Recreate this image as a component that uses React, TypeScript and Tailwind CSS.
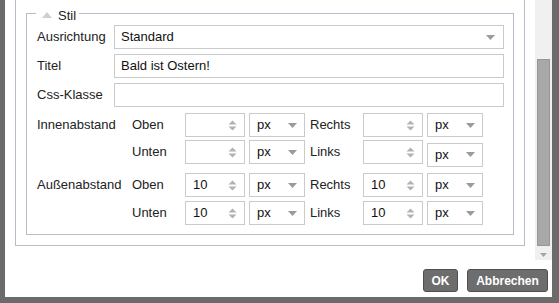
import React from "react";

const label = "text-[13px] text-[#222]";

function Arrow() {
  return (
    <svg width="9" height="5" viewBox="0 0 9 5">
      <path d="M0 0 L9 0 L4.5 5 Z" fill="#9a9a9a" />
    </svg>
  );
}

function Spin({ value }: { value?: string }) {
  return (
    <div className="flex h-[24px] w-[60px] items-center justify-between border border-[#cacaca] bg-white pl-[7px] pr-[7px] text-[13px] text-[#111]">
      <span>{value}</span>
      <svg width="9" height="11" viewBox="0 0 9 11">
        <path d="M0.5 4.5 L4.5 0.5 L8.5 4.5 Z" fill="#b2b2b2" />
        <path d="M0.5 6.5 L4.5 10.5 L8.5 6.5 Z" fill="#b2b2b2" />
      </svg>
    </div>
  );
}

function Unit({ className = "" }: { className?: string }) {
  return (
    <div
      className={`flex h-[24px] w-[56px] items-center justify-between border border-[#cacaca] bg-white pl-[7px] pr-[7px] text-[13px] text-[#111] ${className}`}
    >
      <span>px</span>
      <Arrow />
    </div>
  );
}

function SpacingRow({
  group,
  a,
  b,
  value,
  shiftUnit,
}: {
  group?: string;
  a: string;
  b: string;
  value?: string;
  shiftUnit?: boolean;
}) {
  return (
    <div className="flex h-[24px] items-center">
      <span className={`${label} w-[95px]`}>{group}</span>
      <span className={`${label} w-[53px]`}>{a}</span>
      <Spin value={value} />
      <Unit className="ml-[4px]" />
      <span className={`${label} ml-[5px] w-[53px]`}>{b}</span>
      <Spin value={value} />
      <Unit className={shiftUnit ? "ml-[4px] mt-[5px]" : "ml-[4px]"} />
    </div>
  );
}

export default function App() {
  return (
    <div
      className="flex h-[303px] w-[559px] bg-[#6b6b6b] pl-[5px]"
      style={{ fontFamily: '"Liberation Sans", Arial, sans-serif' }}
    >
      <div className="flex h-[297px] w-[547px] flex-col bg-white">
        <div className="flex h-[260px]">
          <div className="h-[260px] w-[530px] overflow-hidden">
            <div className="ml-[10px] w-[510px] border-x border-b border-[#babac9] px-[10px] pb-[10px] pt-[1px]">
              <fieldset className="border border-[#babac9] pb-[9px] pl-[10px] pr-[9px] pt-0">
                <legend className="-ml-[1px] pl-[6px] pr-[3px]">
                  <span className="inline-flex items-center gap-[6px] text-[13px] leading-[15px] text-[#222]">
                    <svg width="10" height="6" viewBox="0 0 10 6">
                      <path d="M0 6 L5 0 L10 6 Z" fill="#cfcfcf" />
                    </svg>
                    Stil
                  </span>
                </legend>
                <div className="flex flex-col gap-[5px]">
                  <div className="flex h-[24px] items-center">
                    <span className={`${label} w-[77px]`}>Ausrichtung</span>
                    <div className="flex h-[24px] flex-1 items-center justify-between border border-[#cacaca] bg-white pl-[6px] pr-[8px] text-[13px] text-[#111]">
                      <span>Standard</span>
                      <Arrow />
                    </div>
                  </div>
                  <div className="flex h-[24px] items-center">
                    <span className={`${label} w-[77px]`}>Titel</span>
                    <div className="flex h-[24px] flex-1 items-center border border-[#cacaca] bg-white pl-[6px] text-[13px] text-[#111]">
                      Bald ist Ostern!
                    </div>
                  </div>
                  <div className="flex h-[24px] items-center">
                    <span className={`${label} w-[77px]`}>Css-Klasse</span>
                    <div className="h-[24px] flex-1 border border-[#cacaca] bg-white" />
                  </div>
                </div>
                <div className="mt-[6px] flex flex-col gap-[3px]">
                  <SpacingRow group="Innenabstand" a="Oben" b="Rechts" />
                  <SpacingRow a="Unten" b="Links" shiftUnit />
                </div>
                <div className="mt-[9px] flex flex-col gap-[4px]">
                  <SpacingRow group="Außenabstand" a="Oben" b="Rechts" value="10" />
                  <SpacingRow a="Unten" b="Links" value="10" />
                </div>
              </fieldset>
            </div>
          </div>
          <div className="flex w-[17px] flex-col items-center bg-[#f0f0f0] pb-[3px]">
            <div className="mt-[59px] h-[189px] w-[13px] border border-[#979797] bg-[#a8a8a8]" />
            <svg className="mt-[7px]" width="7" height="4" viewBox="0 0 7 4">
              <path d="M0 0 L7 0 L3.5 4 Z" fill="#a3a3a3" />
            </svg>
          </div>
        </div>
        <div className="flex justify-end gap-[9px] pr-[4px] pt-[9px]">
          <button className="h-[23px] w-[35px] rounded-[3px] border border-[#4f4f4f] bg-[#6d6d6d] text-[12px] font-bold text-white">
            OK
          </button>
          <button className="h-[23px] w-[81px] rounded-[3px] border border-[#4f4f4f] bg-[#6d6d6d] text-[12px] font-bold text-white">
            Abbrechen
          </button>
        </div>
      </div>
    </div>
  );
}
